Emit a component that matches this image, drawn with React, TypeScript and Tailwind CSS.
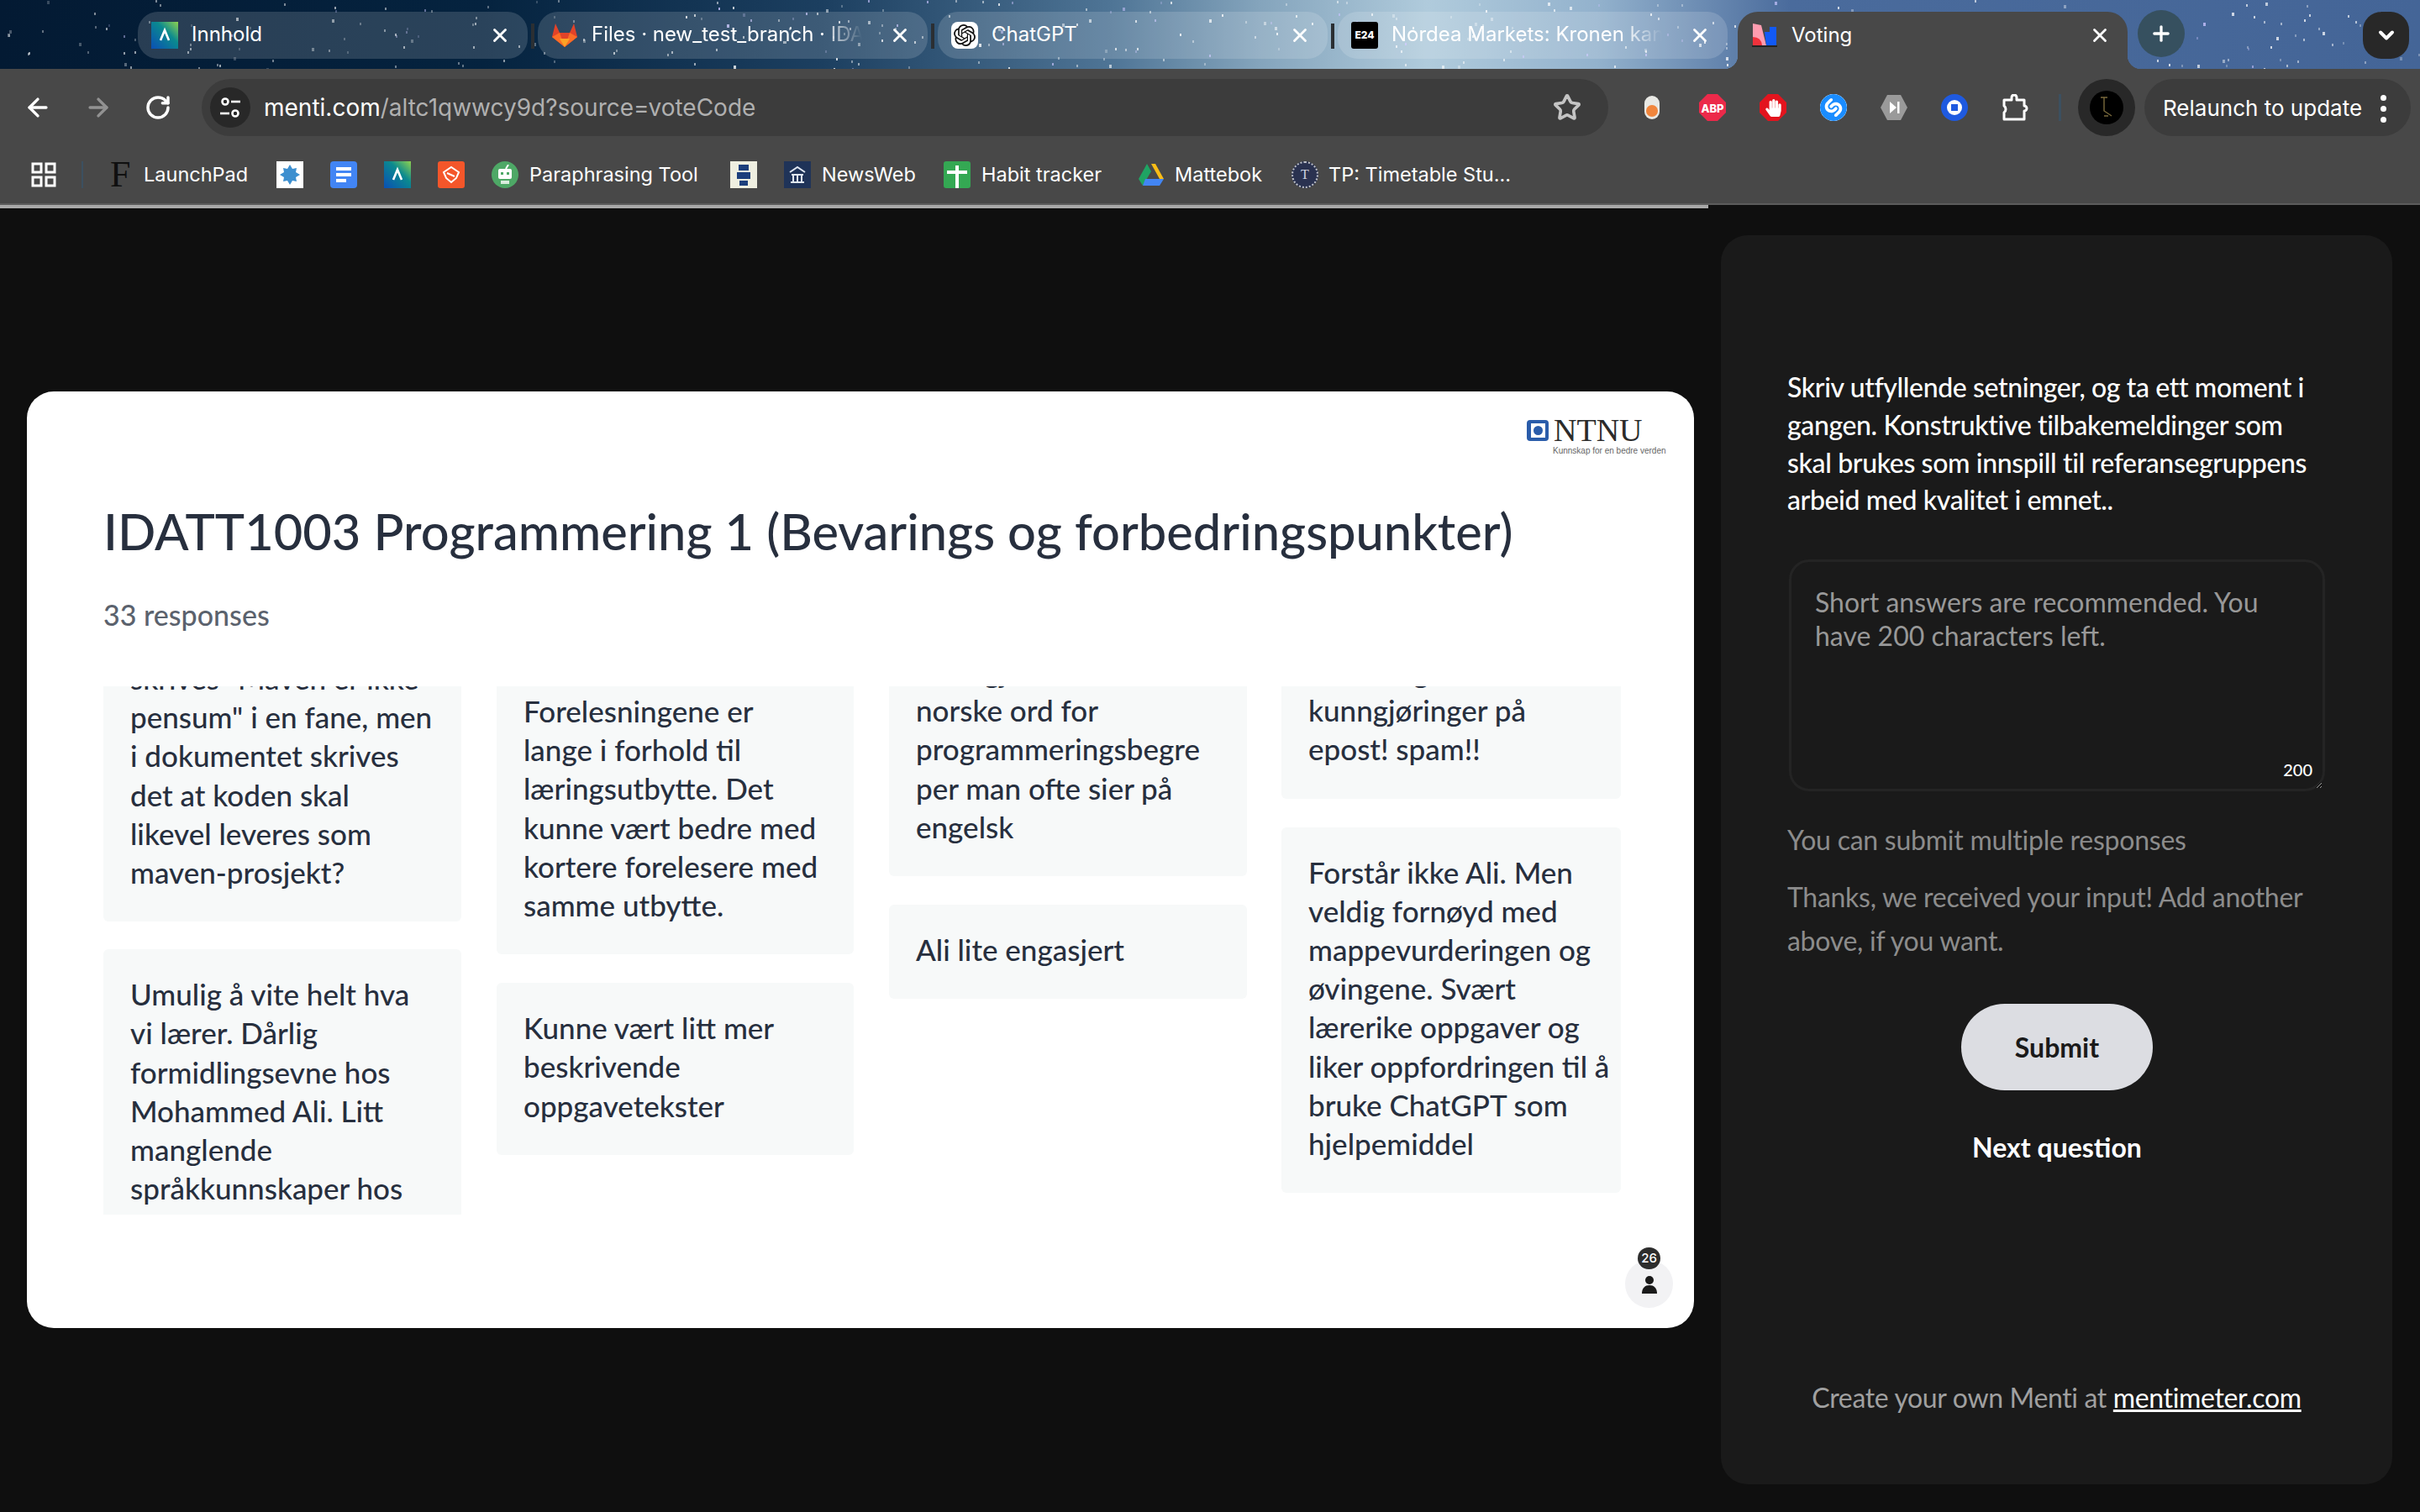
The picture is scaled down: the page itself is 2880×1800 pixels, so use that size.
import React from "react";
import { X, ArrowLeft, ArrowRight, RotateCw, Star, Plus, ChevronDown } from "lucide-react";
import { SiOpenai, SiShazam } from "react-icons/si";
import { FaHandPaper } from "react-icons/fa";

const UI = "font-['Inter',sans-serif]";
const BODY = "font-['Lato',sans-serif]";

let seed = 12345;
const rnd = () => {
  seed = (seed * 16807) % 2147483647;
  return seed / 2147483647;
};
const stars = Array.from({ length: 340 }, () => {
  const x = Math.floor(rnd() * 2880);
  return {
    x,
    y: Math.floor(rnd() * 82),
    s: rnd() > 0.8 ? 3 : 2,
    o: (0.25 + rnd() * 0.55) * (x < 700 ? 0.75 : 1),
    c: rnd() > 0.85 ? "#c9c4ff" : "#ffffff",
  };
});

function Stars() {
  return (
    <svg className="absolute inset-0" width="2880" height="82">
      {stars.map((s, i) => (
        <rect key={i} x={s.x} y={s.y} width={s.s} height={s.s + 1} fill={s.c} opacity={s.o} />
      ))}
    </svg>
  );
}

function LambdaIcon({ size = 32 }: { size?: number }) {
  return (
    <svg width={size} height={size} viewBox="0 0 32 32">
      <defs>
        <linearGradient id="lam" x1="1" y1="0" x2="0" y2="1">
          <stop offset="0" stopColor="#8fd14f" />
          <stop offset="0.4" stopColor="#0b8a8f" />
          <stop offset="1" stopColor="#0a4fb5" />
        </linearGradient>
      </defs>
      <rect width="32" height="32" fill="url(#lam)" />
      <path d="M11 22 L16 10 L21 22" stroke="#fff" strokeWidth="2.6" fill="none" />
    </svg>
  );
}
function GitLab() {
  return (
    <svg width="32" height="32" viewBox="0 0 32 32">
      <path d="M16 30 L1 18 L5 2 L10 13 H22 L27 2 L31 18 Z" fill="#e24329" />
      <path d="M16 30 L1 18 L10 13 Z" fill="#fc6d26" />
      <path d="M16 30 L31 18 L22 13 Z" fill="#fc6d26" />
      <path d="M16 30 L10 20 H22 Z" fill="#fca326" />
    </svg>
  );
}
function MentiIcon() {
  return (
    <svg width="32" height="32" viewBox="0 0 32 32">
      <path d="M2 2 L12 4 L18 28 H2 Z" fill="#ff9db0" />
      <path d="M2 18 Q12 18 13 28 H2 Z" fill="#f0323c" />
      <path d="M16 12 H22 V6 H30 V28 H18 Z" fill="#1259f5" />
      <rect x="1" y="28" width="30" height="2" fill="#222" />
    </svg>
  );
}

function Tab({ w, icon, title, fade }: { w: string; icon: React.ReactNode; title: string; fade?: boolean }) {
  return (
    <div className={`${w} h-[56px] rounded-[24px] bg-white/15 flex items-center pl-4 shrink-0 relative`}>
      <div className="w-8 h-8 shrink-0">{icon}</div>
      <div
        className={`ml-4 mt-[-2px] text-[24px] text-white whitespace-nowrap overflow-hidden w-[322px] ${UI} ${
          fade ? "[mask-image:linear-gradient(to_right,#000_85%,transparent_100%)]" : ""
        }`}
      >
        {title}
      </div>
      <X className="absolute right-[20px] top-[15px] text-white" size={26} strokeWidth={2.6} />
    </div>
  );
}
const Sep = () => <div className="w-[4px] h-[30px] mt-[14px] bg-[#2b2f33] mx-[4px] shrink-0" />;

function TabStrip() {
  return (
    <div className="relative h-[82px] bg-[linear-gradient(to_right,#031a33_0%,#05233f_20%,#1c3f60_34%,#4f7596_46%,#84a4bc_52%,#b0cbdc_59%,#93b2cd_66%,#4a6b9c_74%,#446597_100%)] shrink-0 overflow-hidden">
      <Stars />
      <div className="relative flex items-start pt-[14px] pl-[164px] h-full">
        <Tab w="w-[464px]" icon={<LambdaIcon />} title="Innhold" />
        <Sep />
        <Tab w="w-[464px]" icon={<GitLab />} title="Files · new_test_branch · IDATT1003" fade />
        <Sep />
        <Tab
          w="w-[464px]"
          icon={
            <div className="w-8 h-8 rounded-[8px] bg-white flex items-center justify-center">
              <SiOpenai size={26} color="#111" />
            </div>
          }
          title="ChatGPT"
        />
        <Sep />
        <Tab
          w="w-[464px]"
          icon={
            <div className={`w-8 h-8 rounded-[3px] bg-black text-white text-[12px] font-extrabold flex items-center justify-center ${UI}`}>E24</div>
          }
          title="Nordea Markets: Kronen kan svekke seg"
          fade
        />
        <div className="relative ml-[12px] w-[464px] h-[68px] bg-[#484848] rounded-t-[24px] flex items-start pt-[12px] pl-[16px] shrink-0">
          <div className="absolute -left-[16px] bottom-0 w-[16px] h-[16px] bg-[radial-gradient(circle_at_0_0,transparent_16px,#484848_16.5px)]" />
          <div className="absolute -right-[16px] bottom-0 w-[16px] h-[16px] bg-[radial-gradient(circle_at_100%_0,transparent_16px,#484848_16.5px)]" />
          <div className="w-8 h-8 shrink-0">
            <MentiIcon />
          </div>
          <div className={`ml-4 mt-[-2px] text-[24px] text-white ${UI}`}>Voting</div>
          <X className="absolute right-[20px] top-[15px] text-white" size={26} strokeWidth={2.6} />
        </div>
        <div className="ml-[12px] mt-[-2px] w-[56px] h-[56px] rounded-full bg-[#36505f] flex items-center justify-center shrink-0">
          <Plus className="text-white" size={28} strokeWidth={2.8} />
        </div>
        <div className="ml-[212px] w-[55px] h-[56px] rounded-[22px] bg-[#282828] flex items-center justify-center shrink-0">
          <ChevronDown className="text-white" size={28} strokeWidth={3.4} />
        </div>
      </div>
    </div>
  );
}

function Oct({ fill, children }: { fill: string; children?: React.ReactNode }) {
  return (
    <div className="relative w-8 h-8 flex items-center justify-center shrink-0">
      <svg className="absolute inset-0" width={32} height={32} viewBox="0 0 32 32">
        <polygon points="10,0 22,0 32,10 32,22 22,32 10,32 0,22 0,10" fill={fill} />
      </svg>
      <div className="relative">{children}</div>
    </div>
  );
}

function Extensions() {
  return (
    <div className="flex items-center ml-[36px] gap-[40px]">
      <svg width="18" height="28" viewBox="0 0 18 28" className="shrink-0 mx-[7px]">
        <rect width="18" height="28" rx="9" fill="#e8e8e4" />
        <circle cx="9" cy="18" r="7" fill="#f0853c" />
      </svg>
      <Oct fill="#ec2a4a">
        <span className={`text-white text-[13px] font-extrabold ${UI}`}>ABP</span>
      </Oct>
      <Oct fill="#e3141e">
        <FaHandPaper size={21} color="#fff" />
      </Oct>
      <div className="w-8 h-8 rounded-full bg-[#1a8cff] flex items-center justify-center shrink-0">
        <SiShazam size={32} color="#1a8cff" className="bg-white rounded-full" />
      </div>
      <div className="w-8 h-8 shrink-0">
        <svg width="32" height="32" viewBox="0 0 32 32">
          <polygon points="8,1 24,1 32,16 24,31 8,31 0,16" fill="#9a9a9a" />
          <polygon points="11,9 19,16 11,23" fill="#fff" />
          <rect x="20" y="9" width="2.5" height="14" fill="#fff" />
        </svg>
      </div>
      <div className="w-8 h-8 rounded-full bg-[#1f5ae0] flex items-center justify-center shrink-0">
        <div className="w-[18px] h-[18px] rounded-full bg-white flex items-center justify-center">
          <div className="w-[8px] h-[8px] bg-[#1f5ae0]" />
        </div>
      </div>
      <svg width="32" height="32" viewBox="0 0 32 32" className="shrink-0">
        <path
          d="M3 7 H12 V4 a3 3 0 0 1 6 0 V7 H27 V14 a3 3 0 0 1 0 6 V30 H3 V22 a5 5 0 0 0 0 -8 Z"
          fill="none"
          stroke="#fff"
          strokeWidth="3"
          strokeLinejoin="round"
        />
      </svg>
    </div>
  );
}

function Toolbar() {
  return (
    <div className="h-[80px] bg-[#484848] flex items-start pt-[12px] shrink-0">
      <div className="flex items-center h-[68px] pl-[28px]">
        <ArrowLeft className="text-white" size={34} strokeWidth={2.4} />
        <ArrowRight className="text-[#929292] ml-[38px]" size={34} strokeWidth={2.4} />
        <RotateCw className="text-white ml-[38px]" size={32} strokeWidth={2.6} />
      </div>
      <div className="ml-[36px] w-[1674px] h-[68px] rounded-full bg-[#3c3c3c] flex items-center pl-[10px] pr-[32px] shrink-0">
        <div className="w-[48px] h-[48px] rounded-full bg-[#282828] flex items-center justify-center shrink-0">
          <svg width="26" height="26" viewBox="0 0 26 26" fill="none" stroke="#fff" strokeWidth="2.6">
            <circle cx="7" cy="6" r="3.5" />
            <path d="M14 6 H25" />
            <circle cx="19" cy="20" r="3.5" />
            <path d="M1 20 H12" />
          </svg>
        </div>
        <div className={`ml-[16px] text-[28px] text-white ${UI}`}>
          menti.com<span className="text-[#b0b0b0]">/altc1qwwcy9d?source=voteCode</span>
        </div>
        <Star className="ml-auto text-[#c4c4c4]" size={34} strokeWidth={2.6} />
      </div>
      <div className="h-[68px] flex items-center">
        <Extensions />
        <div className="ml-[36px] w-[3px] h-[32px] bg-[#3c5060]" />
        <div className="ml-[20px] w-[68px] h-[68px] rounded-full bg-[#282828] flex items-center justify-center shrink-0">
          <div className="w-[40px] h-[40px] rounded-full bg-black flex items-center justify-center">
            <svg width="24" height="28" viewBox="0 0 24 28" fill="none" stroke="#7a6a3c" strokeWidth="1.4">
              <path d="M5 2 H13 M9 2 V18 L18 24 M9 24 H14" />
            </svg>
          </div>
        </div>
        <div className="ml-[11px] w-[317px] h-[68px] rounded-full bg-[#3c3c3c] flex items-center pl-[22px] relative shrink-0">
          <span className={`text-[26px] text-white whitespace-nowrap ${UI}`}>Relaunch to update</span>
          <div className="absolute right-[29px] top-[19px] flex flex-col gap-[6px]">
            <div className="w-[7px] h-[7px] rounded-full bg-white" />
            <div className="w-[7px] h-[7px] rounded-full bg-white" />
            <div className="w-[7px] h-[7px] rounded-full bg-white" />
          </div>
        </div>
      </div>
    </div>
  );
}

const BmText = ({ children, cls }: { children: React.ReactNode; cls: string }) => (
  <span className={`text-[23.5px] text-white whitespace-nowrap shrink-0 ${UI} ${cls}`}>{children}</span>
);

function Bookmarks() {
  return (
    <div className="h-[80px] bg-[#484848] flex items-center pl-[37px] pt-[12px] shrink-0">
      <svg width="30" height="30" viewBox="0 0 30 30" fill="none" stroke="#fff" strokeWidth="3" className="shrink-0">
        <rect x="2" y="2" width="10" height="10" />
        <rect x="18" y="2" width="10" height="10" />
        <rect x="2" y="18" width="10" height="10" />
        <rect x="18" y="18" width="10" height="10" />
      </svg>
      <div className="w-[2px] h-[32px] bg-[#3c5060] ml-[30px]" />
      <div className="ml-[32px] w-[22px] text-[44px] leading-none text-[#101010] font-['Liberation_Serif',serif] shrink-0">F</div>
      <BmText cls="ml-[18px] w-[158px]">LaunchPad</BmText>
      <div className="w-8 h-8 bg-white flex items-center justify-center shrink-0">
        <svg width="26" height="26" viewBox="0 0 26 26">
          <polygon points="13,1 16,6 21,5 20,10 25,13 20,16 21,21 16,20 13,25 10,20 5,21 6,16 1,13 6,10 5,5 10,6" fill="#3d8fcf" />
        </svg>
      </div>
      <div className="ml-[32px] w-8 h-8 rounded-[4px] bg-[#4285f4] flex flex-col items-start justify-center gap-[3px] pl-[7px] shrink-0">
        <div className="w-[18px] h-[4px] bg-white" />
        <div className="w-[18px] h-[4px] bg-white" />
        <div className="w-[12px] h-[4px] bg-white" />
      </div>
      <div className="ml-[32px] shrink-0">
        <LambdaIcon />
      </div>
      <div className="ml-[32px] w-8 h-8 rounded-[3px] bg-[#f4562a] flex items-center justify-center shrink-0">
        <svg width="24" height="24" viewBox="0 0 24 24" fill="none" stroke="#fff" strokeWidth="2">
          <path d="M3 9 L12 3 L21 9 L18 16 L12 21 L6 16 Z M7 10 L16 14" />
        </svg>
      </div>
      <div className="ml-[32px] w-8 h-8 rounded-full bg-[#4ea866] flex items-center justify-center shrink-0">
        <svg width="20" height="24" viewBox="0 0 20 24">
          <rect x="2" y="5" width="16" height="12" rx="2" fill="#fff" />
          <rect x="5" y="9" width="3" height="3" fill="#4ea866" />
          <rect x="12" y="9" width="3" height="3" fill="#4ea866" />
          <path d="M11 5 L14 0" stroke="#fff" strokeWidth="2" />
          <rect x="5" y="19" width="10" height="4" fill="#d8ecdc" />
        </svg>
      </div>
      <BmText cls="ml-[13px] w-[239px]">Paraphrasing Tool</BmText>
      <div className="w-8 h-8 bg-[#eeeee0] flex flex-col items-center justify-center gap-[2px] shrink-0">
        <div className="w-[12px] h-[7px] bg-[#1c3f7c]" />
        <div className="w-[16px] h-[8px] bg-[#1c3f7c]" />
        <div className="w-[10px] h-[6px] bg-[#1c3f7c]" />
      </div>
      <div className="ml-[32px] w-8 h-8 bg-[#1f3358] flex items-center justify-center shrink-0">
        <svg width="24" height="24" viewBox="0 0 24 24" fill="none" stroke="#dfe6f0" strokeWidth="2">
          <path d="M3 9 L12 3 L21 9 M5 12 H19 M7 12 V20 M12 12 V20 M17 12 V20 M4 21 H20" />
        </svg>
      </div>
      <BmText cls="ml-[13px] w-[145px]">NewsWeb</BmText>
      <div className="w-8 h-8 rounded-[3px] bg-[#34a853] relative shrink-0">
        <div className="absolute left-[14px] top-[5px] w-[4px] h-[27px] bg-white" />
        <div className="absolute left-[4px] top-[11px] w-[24px] h-[4px] bg-white" />
      </div>
      <BmText cls="ml-[13px] w-[187px]">Habit tracker</BmText>
      <svg width="30" height="30" viewBox="0 0 30 30" className="shrink-0">
        <polygon points="10,2 20,2 30,20 25,20 15,2" fill="#f8bc16" />
        <polygon points="10,2 15,11 5,28 0,20" fill="#1fa463" />
        <polygon points="8,20 30,20 25,28 5,28" fill="#4285f4" />
      </svg>
      <BmText cls="ml-[13px] w-[139px]">Mattebok</BmText>
      <div className="w-8 h-8 rounded-full bg-[#2a3250] border-2 border-dotted border-white/70 text-[#cfd3e0] text-[16px] flex items-center justify-center font-['Liberation_Serif',serif] shrink-0">T</div>
      <BmText cls="ml-[12px]">TP: Timetable Stu...</BmText>
    </div>
  );
}

function Answer({ children }: { children: React.ReactNode }) {
  return <div className="bg-[#f7f9f9] rounded-[6px] pl-[32px] pr-[10px] pt-[30px] pb-[36px] whitespace-nowrap">{children}</div>;
}
const L = ({ children }: { children: React.ReactNode }) => <div className="h-[46.2px] leading-[46.2px]">{children}</div>;

function Slide() {
  return (
    <div className="relative w-[1984px] h-[1115px] mt-[218px] rounded-[32px] bg-white pl-[91px] shrink-0 overflow-hidden">
      <div className="absolute left-[1785px] top-[33px] w-[170px] h-[46px]">
        <div className="flex items-center gap-[6px] h-[26px]">
          <div className="w-[26px] h-[25px] rounded-[4px] bg-[#2a5caa] flex items-center justify-center">
            <div className="w-[17px] h-[17px] bg-white flex items-center justify-center">
              <div className="w-[11px] h-[11px] rounded-full bg-[#2a5caa]" />
            </div>
          </div>
          <span className="text-[38px] leading-none text-[#2b2b2b] font-['Liberation_Serif',serif]">NTNU</span>
        </div>
        <div className="ml-[31px] mt-[7px] text-[10px] leading-none text-[#666] whitespace-nowrap font-['Liberation_Sans',sans-serif]">Kunnskap for en bedre verden</div>
      </div>

      <div className={`pt-[132px] text-[59.6px] leading-[68px] text-[#272f3e] whitespace-nowrap font-medium ${BODY}`}>
        IDATT1003 Programmering 1 (Bevarings og forbedringspunkter)
      </div>
      <div className={`mt-[44px] text-[34px] leading-[44px] text-[#5b626d] font-medium ${BODY}`}>33 responses</div>

      <div className={`mt-[63px] h-[629px] overflow-hidden flex gap-[42px] text-[35px] text-[#272f3e] font-medium ${BODY}`}>
        <div className="w-[426px] shrink-0 flex flex-col gap-[33px] mt-[-63px]">
          <Answer>
            <L>skrives "Maven er ikke</L>
            <L>pensum" i en fane, men</L>
            <L>i dokumentet skrives</L>
            <L>det at koden skal</L>
            <L>likevel leveres som</L>
            <L>maven-prosjekt?</L>
          </Answer>
          <Answer>
            <L>Umulig å vite helt hva</L>
            <L>vi lærer. Dårlig</L>
            <L>formidlingsevne hos</L>
            <L>Mohammed Ali. Litt</L>
            <L>manglende</L>
            <L>språkkunnskaper hos</L>
            <L>foreleser</L>
          </Answer>
        </div>
        <div className="w-[425px] shrink-0 flex flex-col gap-[34px] mt-[-24px]">
          <Answer>
            <L>Forelesningene er</L>
            <L>lange i forhold til</L>
            <L>læringsutbytte. Det</L>
            <L>kunne vært bedre med</L>
            <L>kortere forelesere med</L>
            <L>samme utbytte.</L>
          </Answer>
          <Answer>
            <L>Kunne vært litt mer</L>
            <L>beskrivende</L>
            <L>oppgavetekster</L>
          </Answer>
        </div>
        <div className="w-[426px] shrink-0 flex flex-col gap-[34px] mt-[-71px]">
          <Answer>
            <L>Bruk gjerne</L>
            <L>norske ord for</L>
            <L>programmeringsbegre</L>
            <L>per man ofte sier på</L>
            <L>engelsk</L>
          </Answer>
          <Answer>
            <L>Ali lite engasjert</L>
          </Answer>
        </div>
        <div className="w-[404px] shrink-0 flex flex-col gap-[34px] mt-[-71px] ml-[-1px]">
          <Answer>
            <L>For mange</L>
            <L>kunngjøringer på</L>
            <L>epost! spam!!</L>
          </Answer>
          <Answer>
            <L>Forstår ikke Ali. Men</L>
            <L>veldig fornøyd med</L>
            <L>mappevurderingen og</L>
            <L>øvingene. Svært</L>
            <L>lærerike oppgaver og</L>
            <L>liker oppfordringen til å</L>
            <L>bruke ChatGPT som</L>
            <L>hjelpemiddel</L>
          </Answer>
        </div>
      </div>

      <div className="absolute left-[1902px] top-[1034px] w-[57px] h-[57px] rounded-full bg-[#f2f2f4] flex items-center justify-center">
        <svg width="18" height="22" viewBox="0 0 18 22" className="mt-[2px]">
          <circle cx="9" cy="5" r="5" fill="#1a1a1a" />
          <path d="M0 21 C0 14 4 11 9 11 C14 11 18 14 18 21 Z" fill="#1a1a1a" />
        </svg>
        <div className={`absolute left-[15px] top-[-15px] w-[27px] h-[26px] rounded-full bg-[#2d2d2d] text-white text-[15px] font-medium flex items-center justify-center ${UI}`}>26</div>
      </div>
    </div>
  );
}

function Panel() {
  return (
    <div className={`ml-[32px] mt-[32px] w-[799px] h-[1487px] rounded-[32px] bg-[#1a1a1a] pl-[79px] shrink-0 relative ${BODY}`}>
      <div className="pt-[159px] text-[32px] leading-[44.8px] tracking-[-0.38px] text-white font-medium whitespace-nowrap">
        <div>Skriv utfyllende setninger, og ta ett moment i</div>
        <div>gangen. Konstruktive tilbakemeldinger som</div>
        <div>skal brukes som innspill til referansegruppens</div>
        <div>arbeid med kvalitet i emnet..</div>
      </div>
      <div className="relative mt-[48px] ml-[2px] w-[638px] h-[276px]">
        <textarea
          className="w-[638px] h-[276px] block rounded-[24px] border-[3px] border-[#242424] bg-[#1a1a1a] pl-[28px] pr-[60px] pt-[28px] text-[32px] leading-[40px] outline-none placeholder:text-[#989898]"
          placeholder="Short answers are recommended. You have 200 characters left."
        />
        <div className="absolute right-[15px] bottom-[16px] text-[20px] leading-none text-white font-medium">200</div>
      </div>
      <div className="mt-[38px] text-[32px] leading-[40px] tracking-[-0.25px] text-[#8c8c8c]">You can submit multiple responses</div>
      <div className="mt-[22px] text-[32px] leading-[52px] tracking-[-0.28px] text-[#8c8c8c] whitespace-nowrap">
        <div>Thanks, we received your input! Add another</div>
        <div>above, if you want.</div>
      </div>
      <div className="mt-[49px] ml-[207px] w-[228px] h-[103px] rounded-full bg-[#dcdde2] text-[#1a1a1a] text-[32px] font-bold flex items-center justify-center">Submit</div>
      <div className="mt-[48px] ml-[207px] w-[228px] text-center text-[32px] leading-[40px] text-white font-bold whitespace-nowrap">Next question</div>
      <div className="absolute left-0 right-0 top-[1364px] text-center text-[32px] leading-[40px] tracking-[-0.35px] text-[#a0a0a0]">
        Create your own Menti at <span className="text-white underline">mentimeter.com</span>
      </div>
    </div>
  );
}

export default function App() {
  return (
    <div className="w-[2880px] h-[1800px] bg-[#0f0f0f] flex flex-col overflow-hidden">
      <TabStrip />
      <Toolbar />
      <Bookmarks />
      <div className="h-[6px] flex shrink-0 bg-[#0f0f0f] border-t-2 border-[#5c5c5c]">
        <div className="w-[2033px] h-[4px] bg-[#a8a8a8]" />
      </div>
      <div className="flex pl-[32px] flex-1 min-h-0">
        <Slide />
        <Panel />
      </div>
    </div>
  );
}
